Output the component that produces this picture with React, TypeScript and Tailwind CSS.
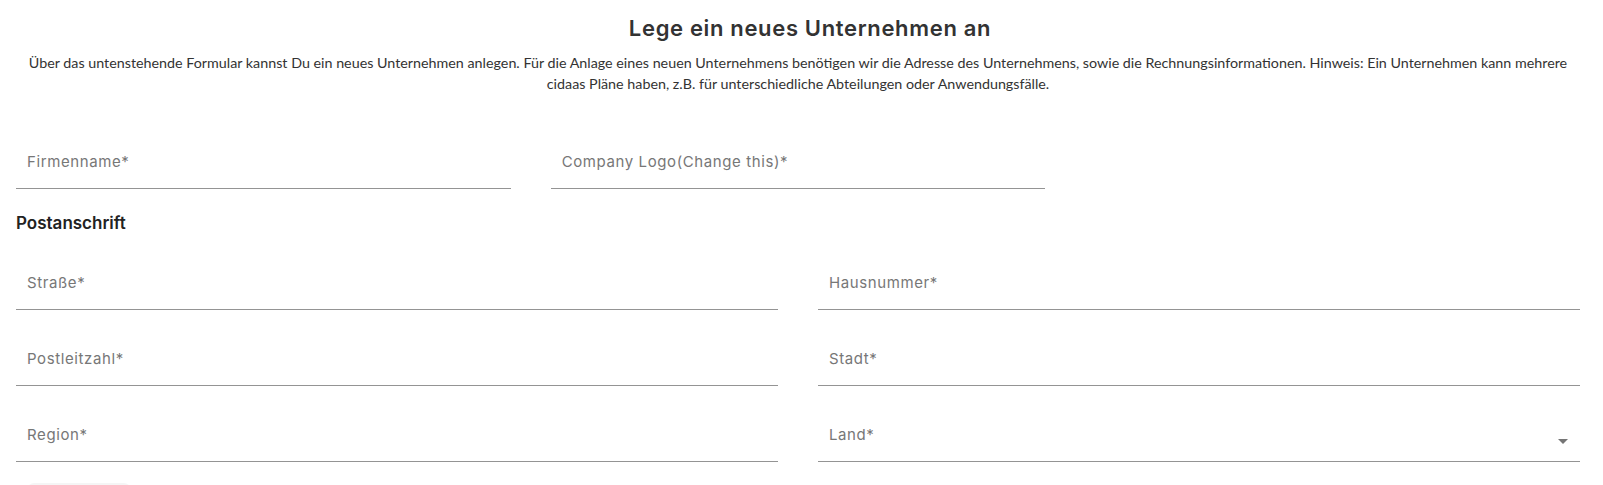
import React from 'react'

const labelFont = { fontFamily: 'Inter, "Noto Sans", sans-serif' }

function Field({ label, select = false }: { label: string; select?: boolean }) {
  return (
    <div className="relative flex h-14 items-center border-b border-[#949494] pl-[11px] pt-1">
      <span className="text-[15px] tracking-[0.04em] text-[#777777]" style={labelFont}>
        {label}
      </span>
      {select && (
        <span className="absolute right-3 top-[33px] h-0 w-0 border-x-[5px] border-t-[5px] border-x-transparent border-t-[#757575]" />
      )}
    </div>
  )
}

export default function App() {
  return (
    <div className="min-h-screen bg-white pl-4 pr-[23px]">
      <h1
        className="pl-6 pt-[14px] text-center text-[22px] font-semibold leading-7 tracking-[0.03em] text-[#333333]"
        style={labelFont}
      >
        Lege ein neues Unternehmen an
      </h1>
      <p
        className="mt-[10px] text-center text-[14.3px] leading-[21px] text-[#333333]"
        style={{ fontFamily: 'Lato, "Noto Sans", sans-serif' }}
      >
        Über das untenstehende Formular kannst Du ein neues Unternehmen anlegen. Für die Anlage eines neuen
        Unternehmens benötigen wir die Adresse des Unternehmens, sowie die Rechnungsinformationen. Hinweis: Ein
        Unternehmen kann mehrere
        <br />
        cidaas Pläne haben, z.B. für unterschiedliche Abteilungen oder Anwendungsfälle.
      </p>

      {/* Firma */}
      <div className="mt-[39px] grid grid-cols-3 gap-x-10">
        <Field label="Firmenname*" />
        <Field label="Company Logo(Change this)*" />
      </div>

      {/* Postanschrift */}
      <h2 className="mt-[22px] text-[17px] font-semibold leading-6 text-[#222222]" style={labelFont}>
        Postanschrift
      </h2>
      <div className="mt-[19px] grid grid-cols-2 gap-x-10 gap-y-5">
        <Field label="Straße*" />
        <Field label="Hausnummer*" />
        <Field label="Postleitzahl*" />
        <Field label="Stadt*" />
        <Field label="Region*" />
        <Field label="Land*" select />
      </div>

      <button className="ml-3 mt-[21px] h-9 w-[102px] rounded-md bg-[#f5f5f5]" />
    </div>
  )
}
